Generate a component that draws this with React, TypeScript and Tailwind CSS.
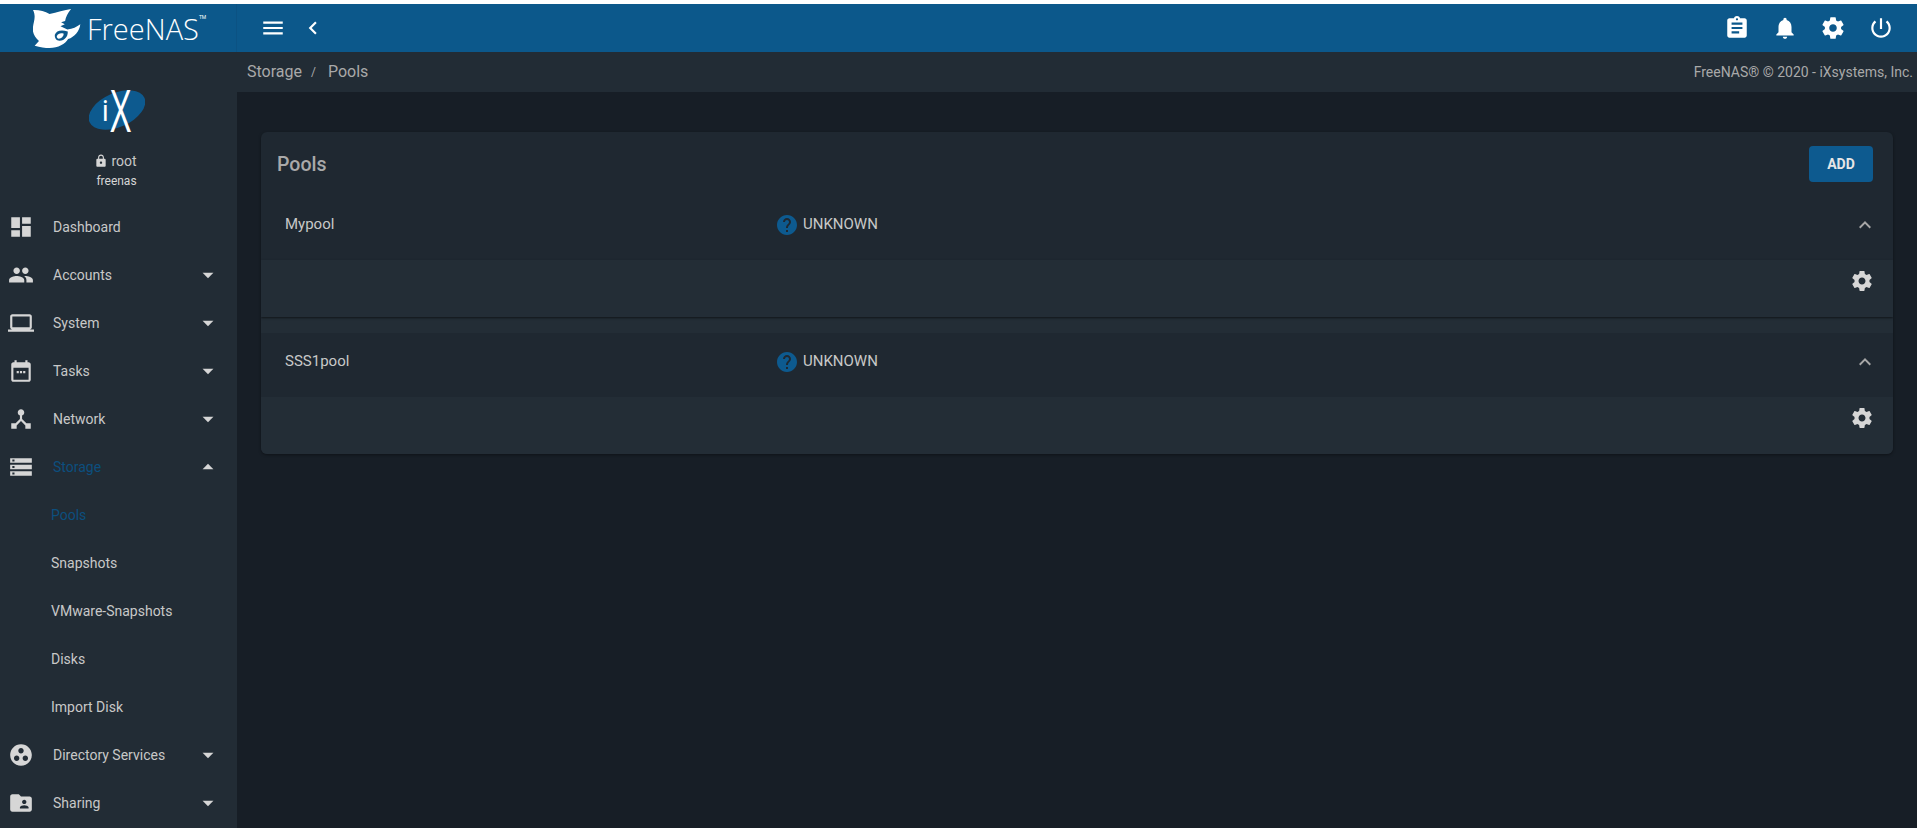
import { ReactNode } from 'react'

const ICONS: Record<string, string> = {
  dashboard: 'M3 13h8V3H3v10zm0 8h8v-6H3v6zm10 0h8V11h-8v10zm0-18v6h8V3h-8z',
  accounts:
    'M16 11c1.66 0 2.99-1.34 2.99-3S17.66 5 16 5c-1.66 0-3 1.34-3 3s1.34 3 3 3zm-8 0c1.66 0 2.99-1.34 2.99-3S9.66 5 8 5C6.34 5 5 6.34 5 8s1.34 3 3 3zm0 2c-2.33 0-7 1.17-7 3.5V19h14v-2.5c0-2.33-4.67-3.5-7-3.5zm8 0c-.29 0-.62.02-.97.05 1.16.84 1.97 1.97 1.97 3.45V19h6v-2.5c0-2.33-4.67-3.5-7-3.5z',
  laptop:
    'M20 18c1.1 0 1.99-.9 1.99-2L22 6c0-1.1-.9-2-2-2H4c-1.1 0-2 .9-2 2v10c0 1.1.9 2 2 2H0v2h24v-2h-4zM4 6h16v10H4V6z',
  tasks:
    'M19 4h-1V2h-2v2H8V2H6v2H5c-1.11 0-1.99.9-1.99 2L3 20c0 1.1.89 2 2 2h14c1.1 0 2-.9 2-2V6c0-1.1-.9-2-2-2zm0 16H5V9h14v11zM8 12h2v2H8zm3 0h2v2h-2zm3 0h2v2h-2z',
  network:
    'M17 16l-4-4V8.82C14.16 8.4 15 7.3 15 6c0-1.66-1.34-3-3-3S9 4.34 9 6c0 1.3.84 2.4 2 2.82V12l-4 4H3v5h5v-3.05l4-4.2 4 4.2V21h5v-5h-4z',
  storage: 'M2 20h20v-4H2v4zm2-3h2v2H4v-2zM2 4v4h20V4H2zm4 3H4V5h2v2zm-4 7h20v-4H2v4zm2-3h2v2H4v-2z',
  directory:
    'M12 2C6.48 2 2 6.48 2 12s4.48 10 10 10 10-4.48 10-10S17.52 2 12 2zM8 17.5c-1.38 0-2.5-1.12-2.5-2.5s1.12-2.5 2.5-2.5 2.5 1.12 2.5 2.5-1.12 2.5-2.5 2.5zM9.5 8c0-1.38 1.12-2.5 2.5-2.5s2.5 1.12 2.5 2.5-1.12 2.5-2.5 2.5S9.5 9.38 9.5 8zm6.5 9.5c-1.38 0-2.5-1.12-2.5-2.5s1.12-2.5 2.5-2.5 2.5 1.12 2.5 2.5-1.12 2.5-2.5 2.5z',
  sharing:
    'M20 6h-8l-2-2H4c-1.1 0-1.99.9-1.99 2L2 18c0 1.1.9 2 2 2h16c1.1 0 2-.9 2-2V8c0-1.1-.9-2-2-2zm-5 3c1.1 0 2 .9 2 2s-.9 2-2 2-2-.9-2-2 .9-2 2-2zm4 8h-8v-1c0-1.33 2.67-2 4-2s4 .67 4 2v1z',
  menu: 'M3 18h18v-2H3v2zm0-5h18v-2H3v2zm0-7v2h18V6H3z',
  back: 'M15.41 7.41L14 6l-6 6 6 6 1.41-1.41L10.83 12z',
  clipboard:
    'M19 3h-4.18C14.4 1.84 13.3 1 12 1c-1.3 0-2.4.84-2.82 2H5c-1.1 0-2 .9-2 2v14c0 1.1.9 2 2 2h14c1.1 0 2-.9 2-2V5c0-1.1-.9-2-2-2zm-7 0c.55 0 1 .45 1 1s-.45 1-1 1-1-.45-1-1 .45-1 1-1zm2 14H7v-2h7v2zm3-4H7v-2h10v2zm0-4H7V7h10v2z',
  bell: 'M12 22c1.1 0 2-.9 2-2h-4c0 1.1.9 2 2 2zm6-6v-5c0-3.07-1.63-5.64-4.5-6.32V4c0-.83-.67-1.5-1.5-1.5s-1.5.67-1.5 1.5v.68C7.64 5.36 6 7.92 6 11v5l-2 2v1h16v-1l-2-2z',
  gear: 'M19.43 12.98c.04-.32.07-.64.07-.98s-.03-.66-.07-.98l2.11-1.65c.19-.15.24-.42.12-.64l-2-3.46c-.12-.22-.39-.3-.61-.22l-2.49 1c-.52-.4-1.08-.73-1.69-.98l-.38-2.65C14.46 2.18 14.25 2 14 2h-4c-.25 0-.46.18-.49.42l-.38 2.65c-.61.25-1.17.59-1.69.98l-2.49-1c-.23-.09-.49 0-.61.22l-2 3.46c-.13.22-.07.49.12.64l2.11 1.65c-.04.32-.07.65-.07.98s.03.66.07.98l-2.11 1.65c-.19.15-.24.42-.12.64l2 3.46c.12.22.39.3.61.22l2.49-1c.52.4 1.08.73 1.69.98l.38 2.65c.03.24.24.42.49.42h4c.25 0 .46-.18.49-.42l.38-2.65c.61-.25 1.17-.59 1.69-.98l2.49 1c.23.09.49 0 .61-.22l2-3.46c.12-.22.07-.49-.12-.64l-2.11-1.65zM12 15.5c-1.93 0-3.5-1.57-3.5-3.5s1.57-3.5 3.5-3.5 3.5 1.57 3.5 3.5-1.57 3.5-3.5 3.5z',
  power:
    'M13 3h-2v10h2V3zm4.83 2.17l-1.42 1.42C17.99 7.86 19 9.81 19 12c0 3.87-3.13 7-7 7s-7-3.13-7-7c0-2.19 1.01-4.14 2.58-5.42L6.17 5.17C4.23 6.82 3 9.26 3 12c0 4.97 4.03 9 9 9s9-4.03 9-9c0-2.74-1.23-5.18-3.17-6.83z',
  lock: 'M18 8h-1V6c0-2.76-2.24-5-5-5S7 3.24 7 6v2H6c-1.1 0-2 .9-2 2v10c0 1.1.9 2 2 2h12c1.1 0 2-.9 2-2V10c0-1.1-.9-2-2-2zm-6 9c-1.1 0-2-.9-2-2s.9-2 2-2 2 .9 2 2-.9 2-2 2zm3.1-9H8.9V6c0-1.71 1.39-3.1 3.1-3.1 1.71 0 3.1 1.39 3.1 3.1v2z',
  help: 'M12 2C6.48 2 2 6.48 2 12s4.48 10 10 10 10-4.48 10-10S17.52 2 12 2zm1 17h-2v-2h2v2zm2.07-7.75l-.9.92C13.45 12.9 13 13.5 13 15h-2v-.5c0-1.1.45-2.1 1.17-2.83l1.24-1.26c.37-.36.59-.86.59-1.41 0-1.1-.9-2-2-2s-2 .9-2 2H8c0-2.21 1.79-4 4-4s4 1.79 4 4c0 .88-.36 1.68-.93 2.25z',
  caretDown: 'M7 10l5 5 5-5z',
  caretUp: 'M7 14l5-5 5 5z',
  chevronUp: 'M7.41 15.41L12 10.83l4.59 4.58L18 14l-6-6-6 6z',
}

const Icon = ({ name, className }: { name: string; className?: string }) => (
  <svg viewBox="0 0 24 24" fill="currentColor" className={className}>
    <path d={ICONS[name]} />
  </svg>
)

const NavItem = ({ icon, label, open, active }: { icon: string; label: string; open?: boolean; active?: boolean }) => (
  <div className="flex h-12 shrink-0 items-center pl-2 pr-4">
    <Icon name={icon} className="h-[26px] w-[26px] shrink-0 text-[#d6d6d6]" />
    <span className={`ml-[19px] flex-1 text-sm ${active ? 'text-[#0c4f7e]' : 'text-[#c8c8c8]'}`}>{label}</span>
    {open !== undefined && <Icon name={open ? 'caretUp' : 'caretDown'} className="h-[26px] w-[26px] text-[#d6d6d6]" />}
  </div>
)

const SubItem = ({ children, active }: { children: ReactNode; active?: boolean }) => (
  <div className={`flex h-12 shrink-0 items-center pl-[51px] text-sm ${active ? 'text-[#0c4f7e]' : 'text-[#c8c8c8]'}`}>
    {children}
  </div>
)

const PoolRow = ({ name, last }: { name: string; last?: boolean }) => (
  <div>
    <div className="flex h-16 items-start bg-[#1f2831] pt-[18px] text-[15px] text-[#c8c8c8]">
      <span className="ml-6 w-[490px] leading-5">{name}</span>
      <Icon name="help" className="h-6 w-6 -translate-y-px text-[#0d5a8f]" />
      <span className="ml-1 leading-5">UNKNOWN</span>
      <Icon name="chevronUp" className="ml-auto mr-4 h-6 w-6 -translate-y-px text-[#a6a6a6]" />
    </div>
    <div
      className={`relative z-10 flex h-[57px] items-start justify-end bg-[#232d36] pr-[19px] pt-[9px] ${
        last ? '' : 'shadow-[0_1px_2px_rgba(0,0,0,0.55)]'
      }`}
    >
      <Icon name="gear" className="h-6 w-6 text-[#d6d6d6]" />
    </div>
  </div>
)

export default function App() {
  return (
    <div className="h-[828px] w-[1917px] overflow-hidden bg-white pt-1 font-['Roboto',sans-serif]">
      {/* Top bar */}
      <header className="flex h-12 bg-[#0c588b]">
        <div className="flex w-[237px] shrink-0 items-center border-r border-[#0c5283] pl-[33px]">
          {/* shark logo, coordinates taken from a 3x crop */}
          <svg viewBox="100 20 145 122" className="h-[41px] w-[48px] shrink-0">
            <path
              fill="#ffffff"
              d="M100 25 C118 24 135 29 150 37 C172 32 195 26 215 22 C205 35 199 46 197 58 L185 62 L196 68 L183 74 L204 84 C220 82 232 76 243 68 C240 90 226 106 206 113 C198 128 176 140 150 140 C136 140 122 137 105 133 L118 119 C104 106 97 92 100 76 C102 60 110 46 100 25 Z"
            />
            <path
              fill="#0c588b"
              d="M166 100 C170 88 184 84 205 90 C206 104 196 118 180 118 C170 118 165 110 166 100 Z"
            />
            <path fill="#ffffff" d="M172 104 C176 96 184 94 193 97 C192 106 186 112 178 112 C174 112 171 108 172 104 Z" />
          </svg>
          <span className="ml-[6px] font-['Open_Sans',sans-serif] text-[29px] font-light leading-none text-white">
            FreeNAS
          </span>
          <span className="mb-5 text-[5px] text-white">TM</span>
        </div>
        <div className="flex flex-1 items-center pl-[23px] pr-[23px] text-white">
          <Icon name="menu" className="h-[26px] w-[26px]" />
          <Icon name="back" className="ml-[14px] h-[26px] w-[26px]" />
          <div className="ml-auto flex items-center gap-[22px]">
            <Icon name="clipboard" className="h-[26px] w-[26px]" />
            <Icon name="bell" className="h-[26px] w-[26px]" />
            <Icon name="gear" className="h-[26px] w-[26px]" />
            <Icon name="power" className="h-[26px] w-[26px]" />
          </div>
        </div>
      </header>

      <div className="flex h-[776px]">
        {/* Sidebar */}
        <aside className="flex w-[237px] shrink-0 flex-col overflow-hidden bg-[#222c35]">
          <div className="flex h-[151px] shrink-0 flex-col items-center pr-1 pt-[37px]">
            <div className="relative h-[42px] w-[56px]">
              <svg viewBox="0 0 56 42" className="absolute inset-0 h-full w-full">
                <ellipse cx="28" cy="21" rx="30" ry="17" transform="rotate(-24 28 21)" fill="#0d5a8f" />
              </svg>
              <span className="absolute left-[13px] top-[3px] font-['Open_Sans',sans-serif] text-[30px] font-medium leading-[36px] text-white">
                i
              </span>
              <span className="absolute left-[15px] top-[-10px] scale-x-[0.62] font-['Open_Sans',sans-serif] text-[58px] font-medium leading-[62px] text-white">
                X
              </span>
            </div>
            <div className="mt-5 flex -translate-x-px items-center text-sm leading-5 text-[#c8c8c8]">
              <Icon name="lock" className="mr-[3px] h-[14px] w-[14px] text-[#d6d6d6]" />
              root
            </div>
            <div className="mt-[2px] text-xs leading-4 text-[#d6d6d6]">freenas</div>
          </div>
          <NavItem icon="dashboard" label="Dashboard" />
          <NavItem icon="accounts" label="Accounts" open={false} />
          <NavItem icon="laptop" label="System" open={false} />
          <NavItem icon="tasks" label="Tasks" open={false} />
          <NavItem icon="network" label="Network" open={false} />
          <NavItem icon="storage" label="Storage" open active />
          <SubItem active>Pools</SubItem>
          <SubItem>Snapshots</SubItem>
          <SubItem>VMware-Snapshots</SubItem>
          <SubItem>Disks</SubItem>
          <SubItem>Import Disk</SubItem>
          <NavItem icon="directory" label="Directory Services" open={false} />
          <NavItem icon="sharing" label="Sharing" open={false} />
        </aside>

        {/* Main */}
        <main className="flex-1 bg-[#171e26]">
          <div className="flex h-10 items-center justify-between bg-[#222c35] pl-[10px] pr-[4px] text-[#a9a9a9]">
            <div className="flex items-center text-base">
              <span>Storage</span>
              <span className="ml-[9px] text-xs">/</span>
              <span className="ml-[12px]">Pools</span>
            </div>
            <span className="text-sm">FreeNAS® © 2020 - iXsystems, Inc.</span>
          </div>

          <section className="mx-6 mt-10 overflow-hidden rounded-md bg-[#1f2831] shadow-[0_1px_3px_rgba(0,0,0,0.4)]">
            <div className="flex h-16 items-center justify-between pl-[16px] pr-[20px]">
              <h1 className="translate-y-px text-[19.5px] font-medium text-[#a9a9a9]">Pools</h1>
              <button className="h-9 w-16 rounded bg-[#0d5a8f] text-sm font-bold text-[#e6e6e6]">ADD</button>
            </div>
            <PoolRow name="Mypool" />
            <div className="h-4 bg-[#232d36]" />
            <PoolRow name="SSS1pool" last />
          </section>
        </main>
      </div>
    </div>
  )
}
